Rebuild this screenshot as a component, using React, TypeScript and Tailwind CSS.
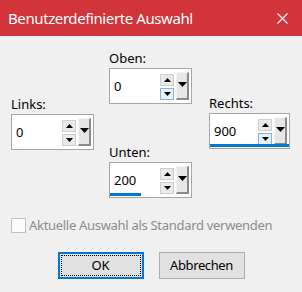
import React from "react";

function ArrowUp() {
    return (
        <svg width="7" height="4" viewBox="0 0 7 4">
            <path d="M0 4 L3.5 0 L7 4 Z" fill="#000" />
        </svg>
    );
}

function ArrowDown({ size = 7 }: { size?: number }) {
    const h = Math.ceil(size / 2);
    return (
        <svg width={size} height={h} viewBox={`0 0 ${size} ${h}`}>
            <path d={`M0 0 L${size / 2} ${h} L${size} 0 Z`} fill="#000" />
        </svg>
    );
}

interface SpinBoxProps {
    value: string;
    downHot?: boolean;
    bar?: string;
    width?: string;
}

function SpinBox({ value, downHot, bar, width = "w-[83px]" }: SpinBoxProps) {
    return (
        <div className={`relative ${width} h-[36px] border border-[#a6a6a6] bg-white flex items-center`}>
            <span className="flex-1 pl-[4px] text-[13px] leading-none text-black">{value}</span>
            <div className="flex flex-col gap-[2px] mt-[1px]">
                <div className="w-[14px] h-[12px] border border-[#cfcfcf] bg-[#eaeaea] flex items-center justify-center">
                    <ArrowUp />
                </div>
                <div
                    className={
                        downHot
                            ? "w-[14px] h-[12px] border border-[#7fb4e6] bg-[#e5f1fb] flex items-center justify-center"
                            : "w-[14px] h-[12px] border border-[#cfcfcf] bg-[#eaeaea] flex items-center justify-center"
                    }
                >
                    <ArrowDown />
                </div>
            </div>
            <div className="ml-[2px] mr-[2px] w-[13px] h-[28px] bg-[#e6e6e6] border-t border-l border-t-[#f4f4f4] border-l-[#f4f4f4] border-r-2 border-b-2 border-r-[#8a8a8a] border-b-[#8a8a8a] flex justify-center pt-[9px]">
                <ArrowDown size={9} />
            </div>
            {bar && <div className={`absolute left-0 bottom-[1px] h-[3px] bg-[#0078d7] ${bar}`} />}
        </div>
    );
}

function Field({ label, children }: { label: string; children: React.ReactNode }) {
    return (
        <div>
            <div className="text-[13px] leading-[20px] text-black">{label}</div>
            {children}
        </div>
    );
}

export default function App() {
    return (
        <div className="w-[302px] h-[292px] bg-[#f0f0f0] flex flex-col font-['Noto_Sans',sans-serif]">
            <div className="h-[36px] bg-[#d1343a] flex items-center justify-between pl-[8px] pr-[14px] text-white text-[15px] tracking-[-0.4px]">
                <span>Benutzerdefinierte Auswahl</span>
                <svg width="11" height="11" viewBox="0 0 11 11">
                    <path d="M0.5 0.5 L10.5 10.5 M10.5 0.5 L0.5 10.5" stroke="#fff" strokeWidth="1.1" />
                </svg>
            </div>

            <div className="flex px-[11px]">
                <div className="w-[83px] pt-[58px]">
                    <Field label="Links:">
                        <SpinBox value="0" />
                    </Field>
                </div>
                <div className="w-[83px] ml-[15px] pt-[12px] flex flex-col gap-[38px]">
                    <Field label="Oben:">
                        <SpinBox value="0" downHot />
                    </Field>
                    <Field label="Unten:">
                        <SpinBox value="200" bar="w-[31px]" />
                    </Field>
                </div>
                <div className="w-[81px] ml-[17px] pt-[57px]">
                    <Field label="Rechts:">
                        <SpinBox value="900" downHot bar="right-0" width="w-[81px]" />
                    </Field>
                </div>
            </div>

            <div className="flex items-center ml-[11px] mt-[20px] h-[15px] whitespace-nowrap">
                <div className="w-[15px] h-[15px] border border-[#c2c2c2] bg-[#fbfbfb]" />
                <span className="ml-[3px] text-[13px] tracking-[-0.3px] text-[#8c8c8c]">Aktuelle Auswahl als Standard verwenden</span>
            </div>

            <div className="flex justify-center gap-[15px] mt-[19px]">
                <button className="w-[86px] h-[27px] border-2 border-[#0078d7] bg-[#e1e1e1] p-[1px]">
                    <div className="w-full h-full border border-dotted border-black flex items-center justify-center text-[13px] text-black">
                        OK
                    </div>
                </button>
                <button className="w-[86px] h-[27px] border border-[#adadad] bg-[#e1e1e1] flex items-center justify-center text-[13px] tracking-[-0.4px] text-black">
                    Abbrechen
                </button>
            </div>
        </div>
    );
}
